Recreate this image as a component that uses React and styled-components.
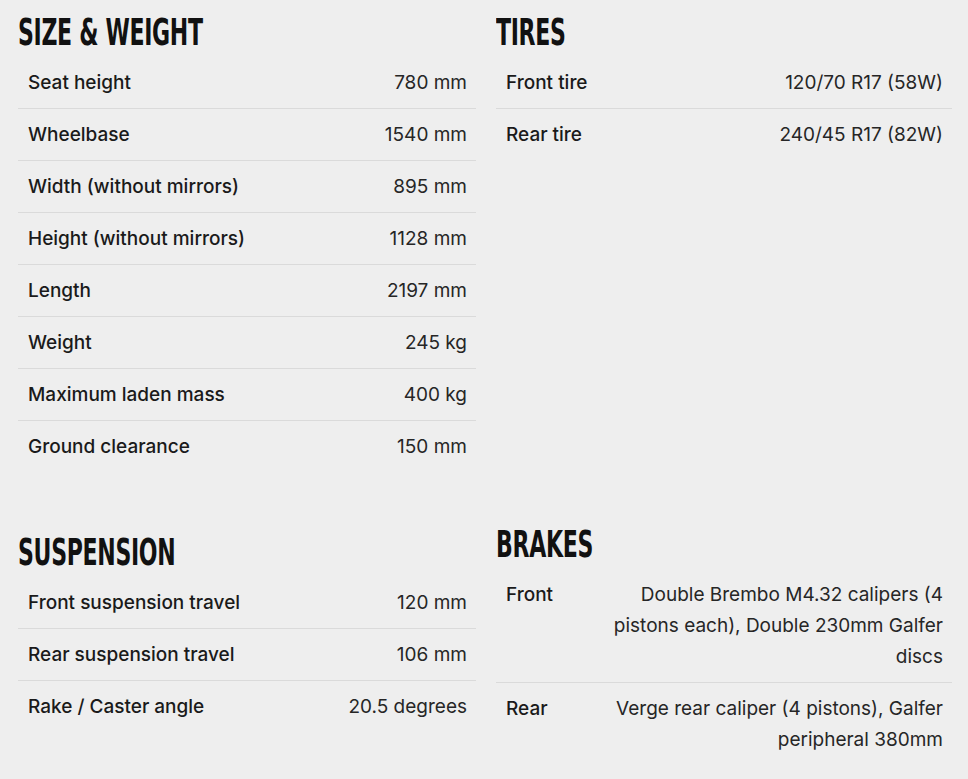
import React from "react";
import styled, { createGlobalStyle } from "styled-components";

const GlobalStyle = createGlobalStyle`
  html, body {
    margin: 0;
    padding: 0;
    background: #eeeeee;
  }
  body {
    font-family: Inter, "Noto Sans", "Liberation Sans", sans-serif;
    color: #1c1c1c;
  }
`;

const Page = styled.div`
  display: grid;
  grid-template-columns: 458px 456px;
  column-gap: 20px;
  row-gap: 40px;
  padding: 0 16px 8px 18px;
  box-sizing: border-box;
  align-items: start;
  align-content: start;
`;

const Section = styled.section`
  margin-top: ${(p) => p.$offset || 0}px;
`;

const HeadingBox = styled.div`
  height: 57px;
  display: flex;
  align-items: flex-start;
  overflow: visible;
`;

const Heading = styled.h2`
  margin: 0;
  padding-top: 13px;
  font-family: "DejaVu Sans Condensed", "DejaVu Sans", sans-serif;
  font-weight: 700;
  font-size: 38px;
  line-height: 38px;
  letter-spacing: -0.5px;
  color: #111111;
  text-transform: uppercase;
  transform: scaleX(0.645);
  transform-origin: left top;
  white-space: nowrap;
`;

const Rows = styled.div`
  display: flex;
  flex-direction: column;
`;

const Row = styled.div`
  display: flex;
  justify-content: space-between;
  align-items: flex-start;
  gap: 20px;
  padding: 10px 9px 10px 10px;
  font-size: 19px;
  line-height: 31px;
  border-bottom: 1px solid #dadada;
  &:last-child {
    border-bottom: none;
  }
`;

const Label = styled.span`
  font-weight: 500;
  color: #1a1a1a;
  white-space: nowrap;
`;

const Value = styled.span`
  font-weight: 400;
  color: #262626;
  text-align: right;
  max-width: ${(p) => (p.$wrap ? "340px" : "none")};
`;

const sections = [
  {
    title: "Size & Weight",
    rows: [
      ["Seat height", "780 mm"],
      ["Wheelbase", "1540 mm"],
      ["Width (without mirrors)", "895 mm"],
      ["Height (without mirrors)", "1128 mm"],
      ["Length", "2197 mm"],
      ["Weight", "245 kg"],
      ["Maximum laden mass", "400 kg"],
      ["Ground clearance", "150 mm"],
    ],
  },
  {
    title: "Tires",
    rows: [
      ["Front tire", "120/70 R17 (58W)"],
      ["Rear tire", "240/45 R17 (82W)"],
    ],
  },
  {
    title: "Suspension",
    offset: 8,
    rows: [
      ["Front suspension travel", "120 mm"],
      ["Rear suspension travel", "106 mm"],
      ["Rake / Caster angle", "20.5 degrees"],
    ],
  },
  {
    title: "Brakes",
    wrap: true,
    rows: [
      ["Front", "Double Brembo M4.32 calipers (4 pistons each), Double 230mm Galfer discs"],
      ["Rear", "Verge rear caliper (4 pistons), Galfer peripheral 380mm"],
    ],
  },
];

export default function App() {
  return (
    <>
      <GlobalStyle />
      <Page>
        {sections.map((s) => (
          <Section key={s.title} $offset={s.offset}>
            <HeadingBox>
              <Heading>{s.title}</Heading>
            </HeadingBox>
            <Rows>
              {s.rows.map(([l, v]) => (
                <Row key={l}>
                  <Label>{l}</Label>
                  <Value $wrap={s.wrap}>{v}</Value>
                </Row>
              ))}
            </Rows>
          </Section>
        ))}
      </Page>
    </>
  );
}
